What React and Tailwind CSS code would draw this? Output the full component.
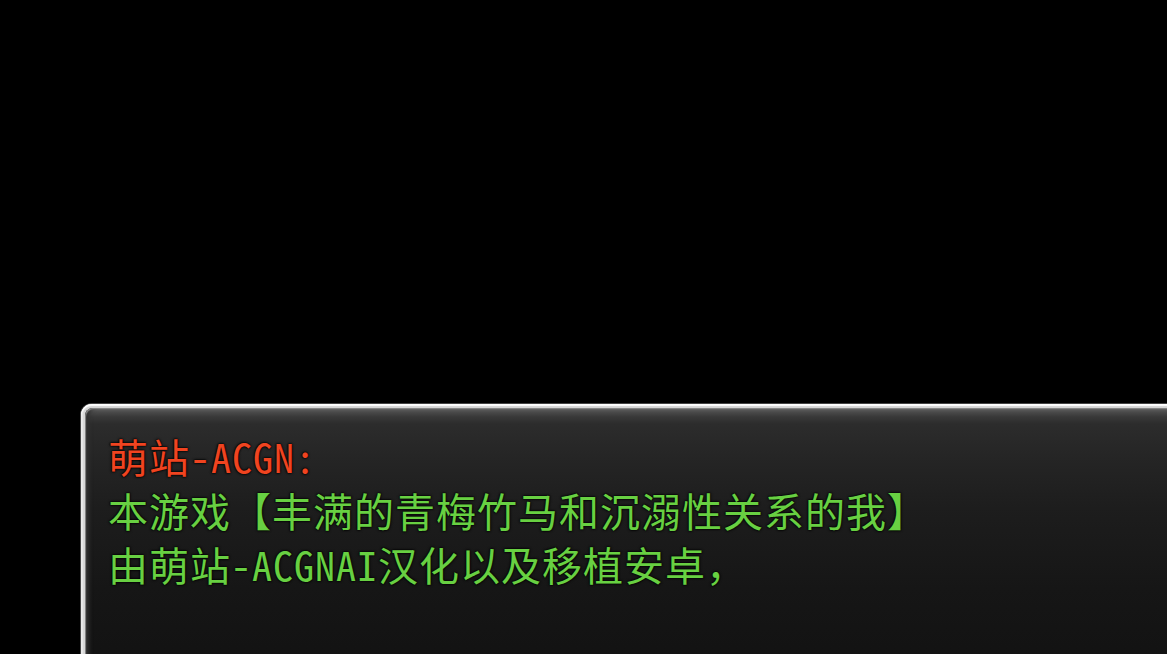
import React from "react";

const font = {
  fontFamily: '"Noto Sans Mono CJK SC", "Noto Sans CJK SC", "DejaVu Sans Mono", monospace',
};

export default function App() {
  return (
    <div className="w-[1167px] h-[654px] bg-black overflow-hidden flex flex-col pt-[403px] pl-[80px]">
      <div className="w-[1120px] h-[280px] shrink-0 rounded-[12px] bg-[#444] p-[1px]">
        <div className="w-full h-full rounded-[11px] bg-[#d6d6d6] shadow-[inset_0_2px_1px_#fff,inset_2px_0_1px_#e8e8e8] p-[4px] pb-0 pr-0">
          <div className="w-full h-full rounded-[8px] bg-[linear-gradient(to_bottom,#6a6a6a_0px,#4a4a4a_4px,#383838_9px,#2c2c2c_16px,#252525_50px,#1d1d1d_100px,#161616_180px,#121212_260px)] shadow-[inset_1px_1px_1px_#8a8a8a,inset_6px_0_4px_-2px_#303030] pl-[23px] pt-[21px]">
            <div
              className="text-[40px] leading-[54px] tracking-[1px] [text-shadow:0_0_3px_#000,0_0_2px_#000,0_0_1px_#000,0_0_0.4px_currentColor]"
              style={font}
            >
              <div className="text-[#f04420]">萌站-ACGN:</div>
              <div className="text-[#68d042]">本游戏【丰满的青梅竹马和沉溺性关系的我】</div>
              <div className="text-[#68d042]">由萌站-ACGNAI汉化以及移植安卓，</div>
            </div>
          </div>
        </div>
      </div>
    </div>
  );
}
